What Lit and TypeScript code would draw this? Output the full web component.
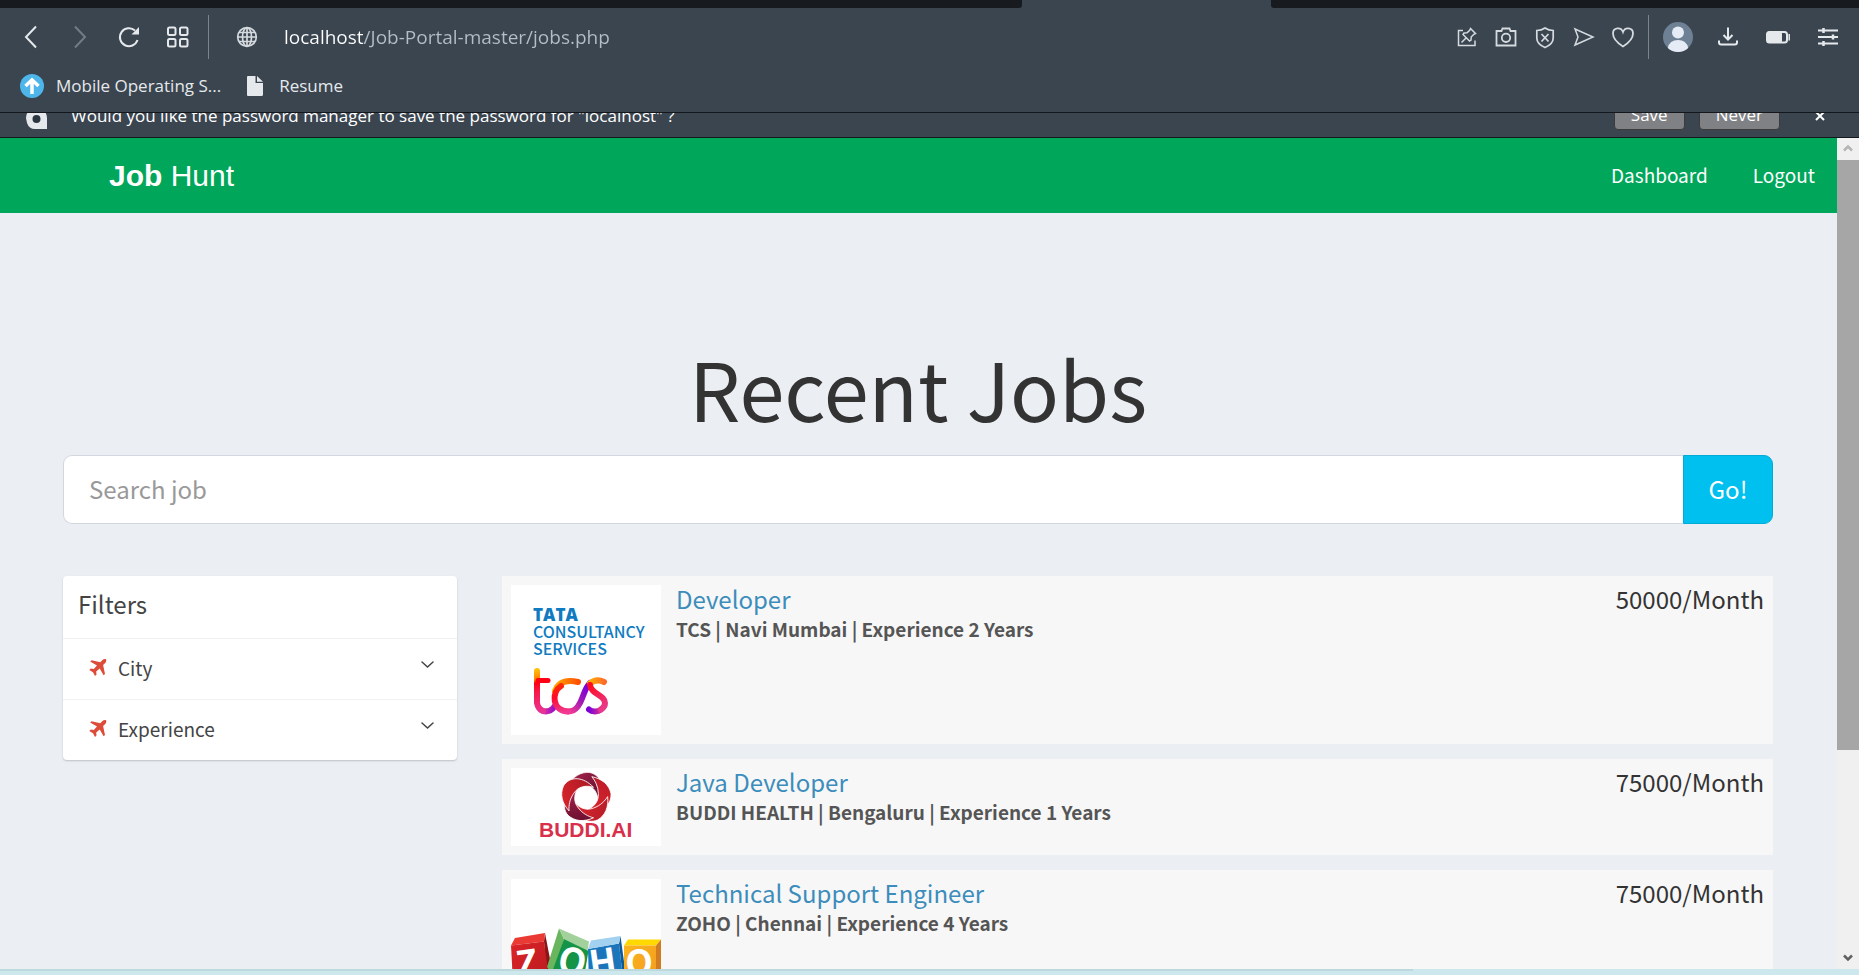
import { LitElement, html, svg, css } from "lit";
import { customElement } from "lit/decorators.js";

interface Job {
  title: string;
  details: string;
  salary: string;
  logo: unknown;
}

/* ---------- company logos ---------- */

const tcsLogo = html`<svg class="logo" viewBox="0 0 150 150" width="150" height="150" role="img" aria-label="Tata Consultancy Services">
  <defs>
    <linearGradient id="tg" gradientUnits="userSpaceOnUse" x1="26" y1="84" x2="34" y2="128">
      <stop offset="0" stop-color="#ffc20a" /><stop offset=".24" stop-color="#ff7a00" /><stop offset=".3" stop-color="#ff0014" />
      <stop offset=".5" stop-color="#f8184a" /><stop offset="1" stop-color="#e8369a" />
    </linearGradient>
    <linearGradient id="th" gradientUnits="userSpaceOnUse" x1="30" y1="0" x2="43" y2="0">
      <stop offset="0" stop-color="#e8369a" /><stop offset="1" stop-color="#9c10c4" />
    </linearGradient>
    <linearGradient id="tc" gradientUnits="userSpaceOnUse" x1="46" y1="100" x2="50" y2="128">
      <stop offset="0" stop-color="#ff2a00" /><stop offset=".45" stop-color="#ff0a30" /><stop offset="1" stop-color="#f03a94" />
    </linearGradient>
    <linearGradient id="to" gradientUnits="userSpaceOnUse" x1="42" y1="0" x2="67" y2="0">
      <stop offset="0" stop-color="#ffb000" /><stop offset="1" stop-color="#ff5000" />
    </linearGradient>
    <linearGradient id="tp" gradientUnits="userSpaceOnUse" x1="58" y1="126" x2="77" y2="102">
      <stop offset="0" stop-color="#f03a94" /><stop offset=".5" stop-color="#a01ab8" /><stop offset="1" stop-color="#7a00d8" />
    </linearGradient>
    <linearGradient id="ty" gradientUnits="userSpaceOnUse" x1="78" y1="0" x2="94" y2="0">
      <stop offset="0" stop-color="#ffae00" /><stop offset="1" stop-color="#ff6a2a" />
    </linearGradient>
    <linearGradient id="ts" gradientUnits="userSpaceOnUse" x1="78" y1="100" x2="92" y2="124">
      <stop offset="0" stop-color="#ff0a1e" /><stop offset="1" stop-color="#e83a8c" />
    </linearGradient>
    <linearGradient id="te" gradientUnits="userSpaceOnUse" x1="78" y1="0" x2="92" y2="0">
      <stop offset="0" stop-color="#7a00d8" /><stop offset="1" stop-color="#e83a8c" />
    </linearGradient>
  </defs>
  <g fill="#0f7bc1">
    <text x="22" y="36" class="tata">TATA</text>
    <text x="22" y="53" class="tata-sub">CONSULTANCY</text>
    <text x="22" y="70" class="tata-sub">SERVICES</text>
  </g>
  <g fill="none" stroke-width="6" stroke-linecap="round">
    <path stroke="url(#th)" d="M30 125 Q34 127.500 39 125.500 Q42 124 43 122" />
    <path stroke="url(#tg)" d="M26 86 V118 Q27 124 32 126" />
    <path stroke="#ff0014" stroke-width="5" d="M27 95.500 H37" />
    <path stroke="url(#to)" d="M44 106 C47 98 54 94 67 97" />
    <path stroke="url(#tp)" d="M57 126.500 C67 126.500 70 116 72 111 C74 106 75 102 79 98" />
    <path stroke="url(#tc)" d="M50 101 C40 107 41 126 57 126.500" />
    <path stroke="url(#ty)" d="M79 98.500 C83 95 88 94.500 93 97" />
    <path stroke="url(#te)" d="M78 124.500 C81 127 87 127 90 124.500" />
    <path stroke="url(#ts)" d="M79 100 C80 109 94 110 94 118 Q94 122 90 124.500" />
  </g>
</svg>`;

const petalColors: [string, string][] = [
  ["#a8264e", "#5c0c2a"],
  ["#b81a28", "#e0262c"],
  ["#b01c28", "#e0262c"],
  ["#5c0c2a", "#b02450"],
  ["#e0262c", "#a81824"],
];

const buddiLogo = html`<svg class="logo" viewBox="0 0 150 78" width="150" height="78" role="img" aria-label="Buddi.AI">
  <defs>
    ${petalColors.map(
      ([a, b], i) => svg`<linearGradient id="p${i}" x1="0" y1="0" x2="1" y2="1">
        <stop offset="0" stop-color=${a} /><stop offset="1" stop-color=${b} />
      </linearGradient>`
    )}
  </defs>
  <g transform="translate(75 29.500)" stroke="#fff" stroke-width=".8" stroke-linejoin="round">
    ${petalColors.map(
      (_, i) => svg`<path transform="rotate(${i * 72})" fill="url(#p${i})"
        d="M-18 -12 C-13 -21 -5 -26 4 -25 C16 -22 19 -9 12 4 C12 -4 8 -11 0 -13 C-7 -15 -13 -14 -18 -12 Z" />`
    )}
  </g>
  <text x="28" y="69" class="buddi">BUDDI.AI</text>
</svg>`;

const zohoLogo = html`<svg class="logo" viewBox="0 0 150 150" width="150" height="150" role="img" aria-label="Zoho">
  <defs>
    <linearGradient id="zr" x1="0" y1="0" x2="1" y2="1"><stop offset="0" stop-color="#dc2428" /><stop offset="1" stop-color="#b81a20" /></linearGradient>
    <linearGradient id="zy" x1="0" y1="0" x2="1" y2="1"><stop offset="0" stop-color="#fbb51c" /><stop offset="1" stop-color="#f39a22" /></linearGradient>
  </defs>
  <path fill="#8a1418" d="M34 54 L39 80 L42 104 H36 L33 62Z" />
  <path fill="#e93a33" d="M4 59 L34 54 L33 62.500 L0 66.500Z" />
  <path fill="url(#zr)" d="M0 66.500 L33 62.500 L38 100 L2 104Z" />
  <path fill="#1a75bb" d="M77 70 L108 64.500 L112 100 L78 104Z" />
  <path fill="#0e5a98" d="M109.500 57 L114 90 L112 100 L108 64.500Z" />
  <path fill="#a3d1f0" d="M80 61.500 L109.500 57 L108 64.500 L77 70Z" />
  <path fill="#6ab65e" d="M48 49.500 L53 60 L42 96 L36 88Z" />
  <path fill="#a2d19c" d="M48 49.500 L78 62.500 L76.500 72 L53 60Z" />
  <path fill="#159347" d="M53 60 L77.500 72 L72 104 L40 96Z" />
  <path fill="#ffd800" d="M117 60.500 L150 60.500 L145 66.500 L113 66.500Z" />
  <path fill="url(#zy)" d="M113 66.500 H145 V104 H113Z" />
  <path fill="#cf7c22" d="M150 60.500 V100 L145 104 V66.500Z" />
  <g fill="#fff" class="zoho" text-anchor="middle">
    <text transform="rotate(-8 18 92)" x="17" y="97">Z</text>
    <text transform="rotate(14 58 92)" x="59" y="95">O</text>
    <text transform="rotate(-8 94 92)" x="93" y="96">H</text>
    <text x="128" y="97">O</text>
  </g>
</svg>`;

const jobs: Job[] = [
  { title: "Developer", details: "TCS | Navi Mumbai | Experience 2 Years", salary: "50000/Month", logo: tcsLogo },
  { title: "Java Developer", details: "BUDDI HEALTH | Bengaluru | Experience 1 Years", salary: "75000/Month", logo: buddiLogo },
  { title: "Technical Support Engineer", details: "ZOHO | Chennai | Experience 4 Years", salary: "75000/Month", logo: zohoLogo },
];

/* ---------- icons ---------- */

const icon = (body: unknown, width = 24, height = 24) =>
  html`<svg viewBox="0 0 ${width} ${height}" width=${width} height=${height} fill="none" stroke="currentColor" stroke-width="2" aria-hidden="true">${body}</svg>`;

const icons = {
  back: icon(svg`<path d="M17 1.500 L7 12 L17 22.500" />`),
  forward: icon(svg`<path d="M7 1.500 L17 12 L7 22.500" />`),
  reload: icon(svg`<path d="M20.500 15 A9 9 0 1 1 18 5.500" /><path fill="currentColor" stroke="none" d="M22 2 V9.500 H14.500Z" />`),
  grid: icon(svg`<rect x="2" y="2.500" width="7.500" height="7.500" rx="1.500" /><rect x="14" y="2.500" width="7.500" height="7.500" rx="1.500" /><rect x="2" y="14" width="7.500" height="7.500" rx="1.500" /><rect x="14" y="14" width="7.500" height="7.500" rx="1.500" />`),
  globe: icon(svg`<g stroke-width="1.700"><circle cx="12" cy="12" r="9.300" /><ellipse cx="12" cy="12" rx="4.500" ry="9.300" /><path d="M2.700 12 H21.300 M12 2.700 V21.300 M4 7.500 H20 M4 16.500 H20" /></g>`),
  pin: icon(svg`<g stroke-width="1.500"><path d="M8 5.500 H3.500 V20.500 H20 V15.500" /><path d="M15.500 3.500 L20.500 8.500 L18.800 9.300 L16.200 12 L16 15 L14.500 16 L8 9.500 L9 8 L12 7.800 L14.700 5.200Z M11 13 L6.500 17.500" /></g>`),
  camera: icon(svg`<g stroke-width="1.800"><path d="M2.500 6 H7.500 L8.500 3.500 H15.500 L16.500 6 H21.500 V20.500 H2.500Z" /><circle cx="12" cy="12.800" r="4.200" /></g>`),
  shield: icon(svg`<g stroke-width="1.700"><path d="M12 3 Q15.500 5.500 20.200 5.500 V13 Q20.200 19 12 22.500 Q3.800 19 3.800 13 V5.500 Q8.500 5.500 12 3Z" /><path d="M8.500 9 L15.500 16.500 M15.500 9 L8.500 16.500" /></g>`),
  send: icon(svg`<path stroke-width="1.500" d="M3 4 L21 12 L3 20 L6 12Z" />`),
  heart: icon(svg`<path stroke-width="1.800" d="M12 21.500 C5 17 2 13 2 8.500 C2 2.500 10 1.500 12 7 C14 1.500 22 2.500 22 8.500 C22 13 19 17 12 21.500Z" />`),
  avatar: icon(
    svg`<circle cx="15" cy="15" r="15" fill="#6e8194" stroke="none" /><g fill="#e6ecf5" stroke="none"><circle cx="15" cy="10.500" r="6" /><path d="M4.800 26 Q6.500 18 15 18 Q23.500 18 25.200 26 A15 15 0 0 1 4.800 26Z" /></g>`,
    30,
    30
  ),
  download: icon(svg`<path d="M12 2.500 V14 M7.500 10 L12 14.500 L16.500 10 M3 15.500 V17.500 Q3 19.500 5 19.500 H19 Q21 19.500 21 17.500 V15.500" />`),
  battery: icon(svg`<rect x="1" y="7" width="20" height="10.500" rx="2.500" /><rect x="1" y="6.500" width="15" height="11.500" rx="2" fill="currentColor" stroke="none" /><path d="M23.200 9 V15.500" stroke-width="1.500" />`),
  sliders: icon(svg`<path d="M2 5.500 H22 M2 12 H22 M2 18.500 H22" /><path d="M7.500 3 V8 M17 9.500 V14.500 M7.500 16 V21" stroke-width="2.500" />`),
  upload: icon(svg`<circle cx="12" cy="12" r="12" fill="#4db5ea" stroke="none" /><path stroke="#fff" stroke-width="3.500" d="M12 20 V7 M5.500 12 L12 5.800 L18.500 12" />`),
  page: icon(svg`<path fill="#e6e9ec" stroke="none" d="M3 2 H10.500 V9 H18 V20.500 Q18 22 16.500 22 H3 Q2 22 2 21 V3 Q2 2 3 2Z M12 2 L18 7.700 H12Z" />`, 20, 24),
  key: icon(svg`<path fill="#e6e9ec" stroke="none" d="M0 11 A10.500 10.500 0 0 1 21 11 V22 H9 Q3 22 1 16Z" /><circle cx="10.500" cy="12" r="4" fill="#2c3640" stroke="none" />`, 22, 24),
  close: icon(svg`<path d="M2 2 L10 10 M10 2 L2 10" />`, 12, 12),
  up: icon(svg`<path stroke-width="2.500" d="M2 7.500 L6 3.500 L10 7.500" />`, 12, 12),
  down: icon(svg`<path stroke-width="2.500" d="M2 3.500 L6 7.500 L10 3.500" />`, 12, 12),
  chevron: icon(svg`<path stroke-width="1.500" stroke-linecap="round" d="M1 1 L6.500 6 L12 1" />`, 13, 8),
  plane: icon(
    svg`<path fill="currentColor" stroke="none" d="M17 .2 C15.800 -.2 14.300 .3 13.200 1.300 L11.300 3.200 L2.600 1.300 L1.200 2.600 L8 6.500 L4.800 10 L1.800 9.500 L.3 11 L4 13.200 L6 17 L7.500 15.500 L7.200 12.600 L10.700 9.400 L14.600 16.200 L16 14.900 L14.100 6.100 L16 4.200 C17.200 3 17.600 1.500 17 .2Z" />`,
    18,
    18
  ),
};

@customElement("browser-chrome")
export class BrowserChrome extends LitElement {
  static styles = css`
    :host { display: block; color: #e6e9ec; background: #3a4550; font: 17px/24px "Open Sans", "Noto Sans", sans-serif; }
    button { display: flex; align-items: center; justify-content: center; padding: 0; border: 0; background: none; color: inherit; font: inherit; }
    svg { display: block; flex: none; }
    .tabs { display: flex; justify-content: space-between; height: 8px; }
    .tab-strip { background: #171a1f; }
    .before { width: 55%; border-bottom-right-radius: 3px; }
    .after { width: 588px; border-bottom-left-radius: 3px; }
    .toolbar { display: flex; align-items: center; height: 57px; padding: 0 6px; }
    .nav { width: 49px; height: 40px; }
    .off { color: #737c85; }
    .divider { width: 1px; height: 44px; margin: 0 4px 0 6px; background: #7b848d; }
    .site { width: 24px; margin: 0 25px 0 22px; color: #d5dade; }
    .address { flex: 1; min-width: 0; height: 32px; padding: 0; border: 0; outline: 0; font: 19px/28px "Open Sans", sans-serif;
      color: transparent; background: linear-gradient(90deg, #fff 80px, #b4bec8 80px); -webkit-background-clip: text; background-clip: text; }
    .action { width: 39px; height: 40px; color: #d5dade; }
    .wide { width: 50px; height: 40px; }
    .bookmarks { display: flex; align-items: center; gap: 24px; height: 42px; padding: 0 20px 5px; }
    .bookmark { display: flex; align-items: center; gap: 12px; color: inherit; text-decoration: none; }
    .page { padding-right: 2px; }
    .prompt { display: flex; align-items: flex-end; box-sizing: border-box; height: 26px; padding: 0 33px 7px 26px; overflow: hidden;
      border: solid #14171b; border-width: 1px 0; color: #fff; }
    .key { margin: 0 23px -1px 0; }
    .message { flex: 1; white-space: pre; line-height: 28px; }
    .choice { box-sizing: border-box; height: 32px; padding: 2px 16px 0; margin-right: 14px; border: 1px solid #3b3b3b; border-radius: 4px; background: #808184; }
    .close { width: 12px; height: 28px; margin-left: 20px; }
  `;

  render() {
    return html`
      <div class="tabs"><div class="tab-strip before"></div><div class="tab-strip after"></div></div>
      <div class="toolbar">
        <button class="nav" aria-label="Back">${icons.back}</button>
        <button class="nav off" aria-label="Forward">${icons.forward}</button>
        <button class="nav" aria-label="Reload">${icons.reload}</button>
        <button class="nav" aria-label="Speed dial">${icons.grid}</button>
        <div class="divider"></div>
        <button class="site" aria-label="Site information">${icons.globe}</button>
        <input class="address" type="text" aria-label="Address" spellcheck="false" value="localhost/Job-Portal-master/jobs.php" />
        <button class="action" aria-label="Pinboard">${icons.pin}</button>
        <button class="action" aria-label="Snapshot">${icons.camera}</button>
        <button class="action" aria-label="Blocker">${icons.shield}</button>
        <button class="action" aria-label="Send">${icons.send}</button>
        <button class="action" aria-label="Bookmark">${icons.heart}</button>
        <div class="divider"></div>
        <button class="wide" aria-label="Profile">${icons.avatar}</button>
        <button class="wide" aria-label="Downloads">${icons.download}</button>
        <button class="wide" aria-label="Battery saver">${icons.battery}</button>
        <button class="wide" aria-label="Easy setup">${icons.sliders}</button>
      </div>
      <nav class="bookmarks">
        <a class="bookmark" href="#">${icons.upload}<span>Mobile Operating S...</span></a>
        <a class="bookmark" href="#"><span class="page">${icons.page}</span><span>Resume</span></a>
      </nav>
      <div class="prompt">
        <span class="key">${icons.key}</span>
        <span class="message">Would you like the password manager to save the password for "localhost" ?</span>
        <button class="choice">Save</button>
        <button class="choice">Never</button>
        <button class="close" aria-label="Close">${icons.close}</button>
      </div>
    `;
  }
}

@customElement("filter-box")
export class FilterBox extends LitElement {
  static styles = css`
    :host { display: block; overflow: hidden; border-radius: 4px; background: #fff; box-shadow: 0 1px 2px rgba(0, 0, 0, 0.2); color: #444; }
    h2 { margin: 0; padding: 15px 15px 21px; font-size: 24px; line-height: 26px; font-weight: 400; }
    button { display: flex; align-items: center; box-sizing: border-box; width: 100%; height: 61px; padding: 0 23px 2px 26px;
      border: 0; border-top: 1px solid #f1f1f1; background: none; font: inherit; color: inherit; text-align: left; }
    svg { display: block; }
    .plane { margin-right: 11px; color: #dd4b39; }
    .name { flex: 1; }
    .chevron { margin-bottom: 6px; }
  `;

  render() {
    return html`
      <h2>Filters</h2>
      ${["City", "Experience"].map(
        (name) => html`<button aria-expanded="false">
          <span class="plane">${icons.plane}</span><span class="name">${name}</span><span class="chevron">${icons.chevron}</span>
        </button>`
      )}
    `;
  }
}

@customElement("job-list")
export class JobList extends LitElement {
  static styles = css`
    :host { display: flex; flex-direction: column; gap: 15px; }
    article { display: flex; gap: 15px; padding: 9px; background: #f7f7f7; }
    .logo { display: block; flex: none; background: #fff; }
    .body { flex: 1; min-width: 0; }
    .line { display: flex; justify-content: space-between; }
    h3, .salary { margin: 0; font-size: 24px; line-height: 28px; font-weight: 400; color: #333; }
    a { color: #3c8dbc; text-decoration: none; }
    .details { margin: 2px 0 0; font-size: 19px; line-height: 28px; font-weight: 700; color: #555; }
    .tata { font: 800 17px "Open Sans", sans-serif; }
    .tata-sub { font: 500 16px "Noto Sans CJK JP", sans-serif; }
    .buddi { font: 700 21px "Liberation Sans", sans-serif; fill: #d8304a; }
    .zoho { font: 700 36px "Noto Sans CJK JP", sans-serif; }
  `;

  render() {
    return jobs.map(
      (job) => html`<article>
        ${job.logo}
        <div class="body">
          <div class="line"><h3><a href="#">${job.title}</a></h3><span class="salary">${job.salary}</span></div>
          <p class="details">${job.details}</p>
        </div>
      </article>`
    );
  }
}

@customElement("app-root")
export class AppRoot extends LitElement {
  static styles = css`
    :host { display: flex; flex-direction: column; height: 100vh; overflow: hidden; font: 19px/28px "Noto Sans CJK JP", "Noto Sans", sans-serif; }
    .viewport { flex: 1; min-height: 0; display: flex; }
    .page { flex: 1; min-width: 0; overflow: hidden; background: #ebeff4; }
    header { display: flex; align-items: center; justify-content: space-between; height: 75px; padding: 0 22px 0 109px; background: #00a65a; }
    header a { color: #fff; text-decoration: none; }
    .brand { font: 30px/36px "Liberation Sans", Arial, sans-serif; }
    .menu { display: flex; gap: 45px; padding-bottom: 2px; }
    main { padding: 130px 64px 0 63px; }
    h1 { margin: 0 0 24px; font-size: 81px; line-height: 88px; font-weight: 400; text-align: center; color: #333; }
    .search { display: flex; height: 69px; margin-bottom: 52px; font-size: 24px; }
    .search input { flex: 1; min-width: 0; padding: 0 25px 2px; border: 1px solid #d2d6de; border-right: 0; border-radius: 9px 0 0 9px; outline: 0;
      background: #fff; color: #555; font: inherit; }
    .search input::placeholder { color: #999; opacity: 1; }
    .search button { width: 90px; padding: 0 0 2px; border: 1px solid #00acd6; border-radius: 0 9px 9px 0; background: #00c0ef; color: #fff; font: inherit; }
    .columns { display: grid; grid-template-columns: 31fr 100fr; gap: 45px; align-items: start; }
    .scrollbar { display: flex; flex-direction: column; width: 22px; background: #f0f0f0; }
    .scrollbar button { display: flex; align-items: center; justify-content: center; height: 22px; padding: 0; border: 0; background: none; color: #606060; }
    .scrollbar .up { color: #b4b4b4; }
    .track { flex: 1; }
    .thumb { height: 75%; background: #a6a6a6; }
    .edge { height: 6px; background: #cde8ed; }
    .edge-shade { width: 76%; height: 2px; background: #bdd9de; }
  `;

  render() {
    return html`
      <browser-chrome></browser-chrome>
      <div class="viewport">
        <div class="page">
          <header>
            <a class="brand" href="#"><b>Job</b> Hunt</a>
            <nav class="menu"><a href="#">Dashboard</a><a href="#">Logout</a></nav>
          </header>
          <main>
            <h1>Recent Jobs</h1>
            <div class="search">
              <input type="text" placeholder="Search job" aria-label="Search job" />
              <button>Go!</button>
            </div>
            <div class="columns">
              <filter-box></filter-box>
              <job-list></job-list>
            </div>
          </main>
        </div>
        <div class="scrollbar">
          <button class="up" aria-label="Scroll up">${icons.up}</button>
          <div class="track"><div class="thumb"></div></div>
          <button aria-label="Scroll down">${icons.down}</button>
        </div>
      </div>
      <div class="edge"><div class="edge-shade"></div></div>
    `;
  }
}
